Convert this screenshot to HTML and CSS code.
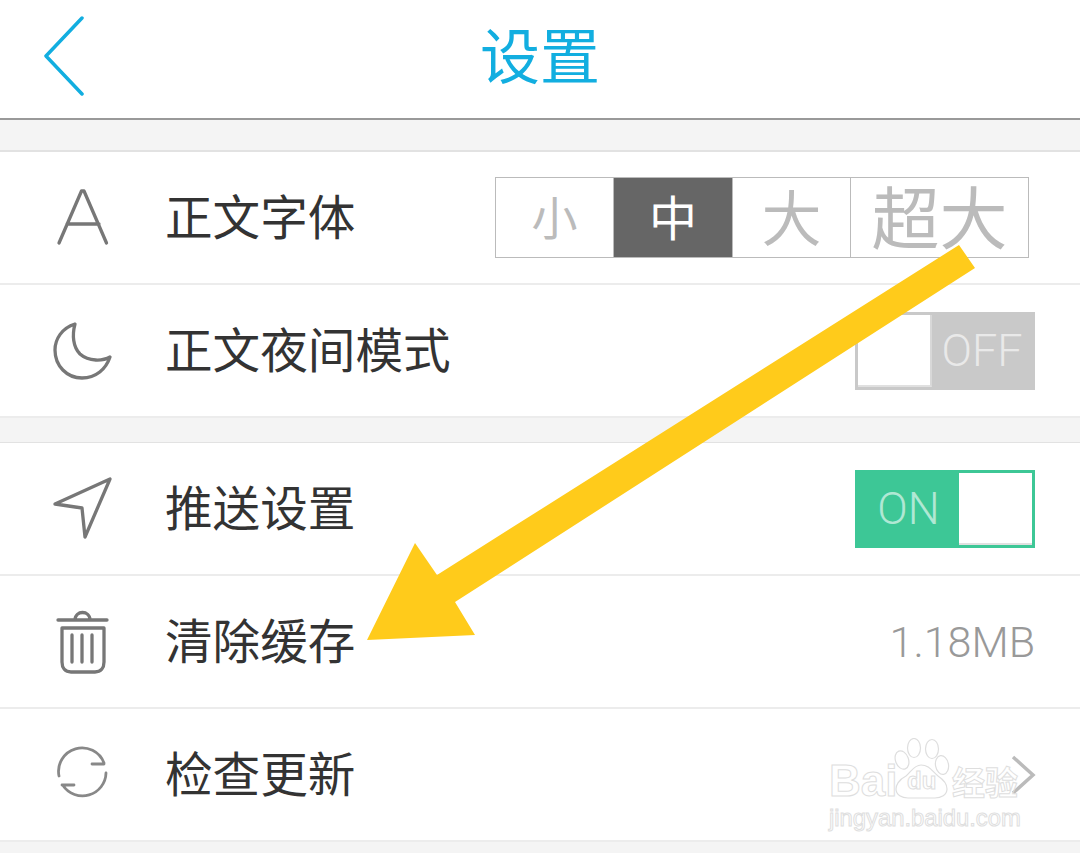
FILE: index.html
```html
<!DOCTYPE html>
<html lang="zh-CN">

<head>
    <meta charset="UTF-8">
    <meta name="viewport" content="width=device-width, initial-scale=1.0">
    <title>设置</title>
    <link rel="stylesheet" href="styles.css">
</head>

<body>
    <header class="topbar">
        <svg class="back" width="40" height="82" viewBox="0 0 40 82">
            <path d="M38 2 L2 40 L38 78" />
        </svg>
        <h1>设置</h1>
    </header>

    <section class="group">
        <div class="row">
            <svg class="icon" width="60" height="60" viewBox="0 0 60 60">
                <path d="M6 55 L28.5 3 H31 L53.5 55 M14 36 H46" />
            </svg>
            <span class="label">正文字体</span>
            <div class="sizes">
                <span class="size size-s">小</span>
                <span class="size size-m active">中</span>
                <span class="size size-l">大</span>
                <span class="size size-xl">超大</span>
            </div>
        </div>
        <div class="row">
            <svg class="icon" width="60" height="60" viewBox="0 0 60 60">
                <path d="M22 3 C9 7 2 18 2 29 C2 45 14 57 29 57 C43 57 53 48 57 36 C50 40 36 41 27 33 C20 26 19 14 22 3 Z" />
            </svg>
            <span class="label">正文夜间模式</span>
            <div class="switch off">
                <span class="knob"></span>
                <span class="switch-text">OFF</span>
            </div>
        </div>
    </section>

    <section class="group">
        <div class="row">
            <svg class="icon" width="60" height="64" viewBox="0 0 60 64">
                <path d="M2 27 L57 2 L32 60 L29 31 Z" />
            </svg>
            <span class="label">推送设置</span>
            <div class="switch on">
                <span class="switch-text">ON</span>
                <span class="knob"></span>
            </div>
        </div>
        <div class="row">
            <svg class="icon" width="60" height="64" viewBox="0 0 60 64">
                <path d="M5 10 H54 M22 10 C22 0 37 0 37 10 M9 18 V52 C9 58 12 62 18 62 H42 C48 62 51 58 51 52 V18 Z M19 25 V52 M29 25 V52 M39 25 V52" />
            </svg>
            <span class="label">清除缓存</span>
            <span class="value">1.18MB</span>
        </div>
        <div class="row">
            <svg class="icon icon-thin" width="60" height="60" viewBox="0 0 60 60">
                <path d="M6 31 A23.5 23.5 0 0 1 51 18 M39 19 H51 M53 28 A23.5 23.5 0 0 1 10 40.5 M9 40 H21" />
            </svg>
            <span class="label">检查更新</span>
            <svg class="chevron" width="26" height="40" viewBox="0 0 26 40">
                <path d="M3 2 L23 20 L3 38" />
            </svg>
        </div>
    </section>

    <div class="gap-end"></div>

    <svg class="arrow" width="1080" height="853" viewBox="0 0 1080 853">
        <polygon points="959,245 975,268 455,602 475,635 367,640 415,543 437,575" />
    </svg>

    <div class="watermark">
        <svg class="paw" width="56" height="62" viewBox="0 0 56 62">
            <ellipse cx="8" cy="22" rx="6.5" ry="9.5" transform="rotate(-20 8 22)" />
            <ellipse cx="20" cy="10" rx="6.5" ry="9.5" />
            <ellipse cx="38" cy="11" rx="6.5" ry="9.5" />
            <ellipse cx="48" cy="27" rx="6.5" ry="9.5" transform="rotate(-10 48 27)" />
            <path d="M27 27 C20 27 17 34 12 38 C4 42 2 48 2 51 C2 57 8 60 14 60 H41 C47 60 53 57 53 51 C53 46 50 42 44 38 C38 33 35 27 27 27 Z" />
        </svg>
        <div class="wm-main"><span class="wm-bai">Bai</span><span class="wm-du">du</span><span class="wm-cn">经验</span></div>
        <div class="wm-url">jingyan.baidu.com</div>
    </div>
</body>

</html>
```

FILE: styles.css
```css
* {
    margin: 0;
    padding: 0;
    box-sizing: border-box;
}

html,
body {
    height: 853px;
    overflow: hidden;
}

body {
    position: relative;
    font-family: "Noto Sans CJK SC", "Noto Sans", sans-serif;
    background: #f4f4f4;
    color: #333;
}

.topbar {
    position: relative;
    height: 120px;
    background: white;
    border-bottom: 2px solid #999;
    display: flex;
    align-items: center;
    justify-content: center;
}

.topbar h1 {
    font-size: 60px;
    font-weight: 400;
    color: #12aee0;
    line-height: 1;
    margin-top: -12px;
}

.back {
    position: absolute;
    left: 44px;
    top: 16px;
}

.back path {
    fill: none;
    stroke: #12aee0;
    stroke-width: 3.5;
    stroke-linecap: round;
    stroke-linejoin: round;
}

.group {
    background: white;
    margin-top: 30px;
    border-top: 2px solid #e2e2e2;
}

.group + .group {
    margin-top: 24px;
    border-top-width: 1px;
}

.row {
    height: 133px;
    display: flex;
    align-items: center;
    padding-left: 53px;
    padding-right: 45px;
    border-bottom: 2px solid #ececec;
}

.icon {
    flex: none;
    margin-right: 52px;
}

.icon path {
    fill: none;
    stroke: #777;
    stroke-width: 3.3;
    stroke-linecap: round;
    stroke-linejoin: round;
}

.icon-thin path {
    stroke: #888;
    stroke-width: 2.8;
}

.label {
    flex: 1;
    font-size: 47.6px;
    line-height: 1;
    margin-top: -6px;
    color: #333;
}

.sizes {
    display: flex;
    width: 534px;
    height: 81px;
    border: 1px solid #bbb;
    color: #bbb;
    margin-right: 6px;
    margin-top: -1px;
}

.size {
    display: flex;
    align-items: center;
    justify-content: center;
    line-height: 1;
    padding-bottom: 5px;
    border-left: 1px solid #bbb;
}

.size-s {
    width: 117px;
    font-size: 46px;
    border-left: 0;
}

.size-m {
    width: 119px;
    font-size: 48px;
}

.size-l {
    width: 118px;
    font-size: 60px;
}

.size-xl {
    flex: 1;
    font-size: 68px;
}

.size.active {
    background: #666;
    color: white;
}

.switch {
    display: flex;
    width: 180px;
    height: 78px;
    padding: 3px;
    align-items: stretch;
    justify-content: space-between;
}

.switch.off {
    background: #c9c9c9;
}

.switch.on {
    background: #3dc796;
}

.knob {
    width: 74px;
    background: white;
    border-bottom: 2px solid rgba(0, 0, 0, 0.12);
}

.switch.off .knob {
    border-right: 2px solid rgba(0, 0, 0, 0.15);
}

.switch.on .knob {
    width: 73px;
}

.switch-text {
    flex: 1;
    display: flex;
    align-items: center;
    justify-content: center;
    font-family: "Roboto", sans-serif;
    font-weight: 300;
    font-size: 45px;
    color: rgba(255, 255, 255, 0.6);
}

.value {
    font-family: "Roboto", sans-serif;
    font-weight: 300;
    font-size: 43px;
    color: #999;
}

.chevron {
    flex: none;
    margin-right: -1px;
}

.chevron path {
    fill: none;
    stroke: #bbb;
    stroke-width: 3.5;
}

.gap-end {
    height: 12px;
}

.arrow {
    position: absolute;
    left: 0;
    top: 0;
}

.arrow polygon {
    fill: #ffcb1b;
}

.watermark {
    position: absolute;
    left: 829px;
    top: 737px;
    width: 196px;
    color: transparent;
    -webkit-text-stroke: 1px #dedede;
}

.paw {
    position: absolute;
    left: 65px;
    top: 1px;
}

.paw ellipse,
.paw path {
    fill: white;
    stroke: #dedede;
    stroke-width: 1.2;
}

.wm-main {
    position: relative;
    display: flex;
    align-items: center;
    height: 32px;
    margin-top: 28px;
    font-family: "Liberation Sans", sans-serif;
    font-weight: 700;
}

.wm-bai {
    font-size: 44px;
    width: 78px;
}

.wm-du {
    font-size: 24px;
    width: 45px;
}

.wm-cn {
    font-family: "Noto Sans CJK SC", sans-serif;
    font-size: 33px;
    white-space: nowrap;
}

.wm-url {
    position: relative;
    margin-top: 7px;
    font-family: "Liberation Sans", sans-serif;
    font-size: 23.8px;
    white-space: nowrap;
}
```
